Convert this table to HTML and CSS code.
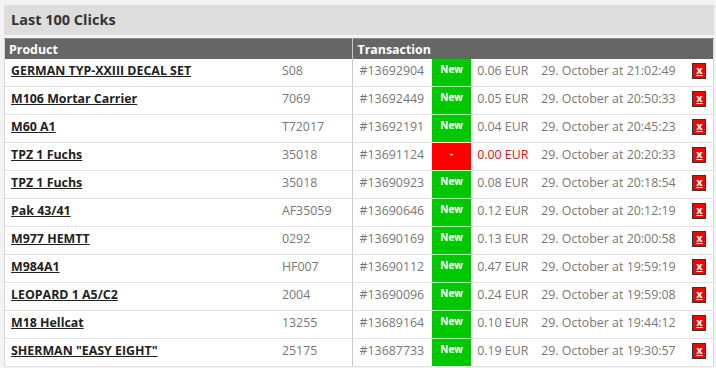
FILE: index.html
```html
<!DOCTYPE html>
<html>
<head>
<meta charset="utf-8">
<link rel="stylesheet" href="styles.css">
</head>
<body>
<div class="panel">
  <h2 class="title">Last 100 Clicks</h2>
  <table class="clicks">
    <colgroup>
      <col class="c-name"><col class="c-code"><col class="c-id"><col class="c-badge"><col class="c-amt"><col class="c-date"><col class="c-del">
    </colgroup>
    <thead>
      <tr><th colspan="2" class="divider">Product</th><th colspan="5">Transaction</th></tr>
    </thead>
    <tbody>
      <tr><td><a href="#">GERMAN TYP-XXIII DECAL SET</a></td><td class="divider">S08</td><td>#13692904</td><td class="badge new">New</td><td>0.06 EUR</td><td>29. October at 21:02:49</td><td class="del"><span class="x">x</span></td></tr>
      <tr><td><a href="#">M106 Mortar Carrier</a></td><td class="divider">7069</td><td>#13692449</td><td class="badge new">New</td><td>0.05 EUR</td><td>29. October at 20:50:33</td><td class="del"><span class="x">x</span></td></tr>
      <tr><td><a href="#">M60 A1</a></td><td class="divider">T72017</td><td>#13692191</td><td class="badge new">New</td><td>0.04 EUR</td><td>29. October at 20:45:23</td><td class="del"><span class="x">x</span></td></tr>
      <tr><td><a href="#">TPZ 1 Fuchs</a></td><td class="divider">35018</td><td>#13691124</td><td class="badge bad">-</td><td class="red">0.00 EUR</td><td>29. October at 20:20:33</td><td class="del"><span class="x">x</span></td></tr>
      <tr><td><a href="#">TPZ 1 Fuchs</a></td><td class="divider">35018</td><td>#13690923</td><td class="badge new">New</td><td>0.08 EUR</td><td>29. October at 20:18:54</td><td class="del"><span class="x">x</span></td></tr>
      <tr><td><a href="#">Pak 43/41</a></td><td class="divider">AF35059</td><td>#13690646</td><td class="badge new">New</td><td>0.12 EUR</td><td>29. October at 20:12:19</td><td class="del"><span class="x">x</span></td></tr>
      <tr><td><a href="#">M977 HEMTT</a></td><td class="divider">0292</td><td>#13690169</td><td class="badge new">New</td><td>0.13 EUR</td><td>29. October at 20:00:58</td><td class="del"><span class="x">x</span></td></tr>
      <tr><td><a href="#">M984A1</a></td><td class="divider">HF007</td><td>#13690112</td><td class="badge new">New</td><td>0.47 EUR</td><td>29. October at 19:59:19</td><td class="del"><span class="x">x</span></td></tr>
      <tr><td><a href="#">LEOPARD 1 A5/C2</a></td><td class="divider">2004</td><td>#13690096</td><td class="badge new">New</td><td>0.24 EUR</td><td>29. October at 19:59:08</td><td class="del"><span class="x">x</span></td></tr>
      <tr><td><a href="#">M18 Hellcat</a></td><td class="divider">13255</td><td>#13689164</td><td class="badge new">New</td><td>0.10 EUR</td><td>29. October at 19:44:12</td><td class="del"><span class="x">x</span></td></tr>
      <tr><td><a href="#">SHERMAN "EASY EIGHT"</a></td><td class="divider">25175</td><td>#13687733</td><td class="badge new">New</td><td>0.19 EUR</td><td>29. October at 19:30:57</td><td class="del"><span class="x">x</span></td></tr>
    </tbody>
  </table>
</div>
</body>
</html>
```
FILE: styles.css
```css
html, body {
  margin: 0;
  padding: 0;
  background: #f3f3f3;
  font-family: "Open Sans", "DejaVu Sans", sans-serif;
}
.panel {
  padding: 5px 2px 0 4px;
}
.title {
  margin: 0 0 3px 0;
  height: 30px;
  line-height: 30px;
  background: #dddddd;
  color: #333;
  font-size: 14.5px;
  font-weight: bold;
  padding-left: 7px;
}
.clicks {
  width: 710px;
  border-collapse: collapse;
  table-layout: fixed;
  background: #fff;
  border-left: 1px solid #d8d8d8;
  border-right: 1px solid #d8d8d8;
}
.c-name { width: 271px; }
.c-code { width: 77px; }
.c-id { width: 79px; }
.c-badge { width: 39px; }
.c-amt { width: 64px; }
.c-date { width: 151px; }
.c-del { width: 27px; }
.clicks th {
  background: #666;
  color: #fff;
  font-size: 12.4px;
  font-weight: bold;
  text-align: left;
  height: 20px;
  padding: 0 4px;
  border-top: 1px solid #888;
}
.clicks th.divider, .clicks td.divider {
  border-right: 1px solid #c8c8c8;
}
.clicks td {
  padding: 3px 6px 7px 6px;
  line-height: 17px;
  font-size: 12.4px;
  color: #777;
  border-bottom: 1px solid #e2e2e2;
  white-space: nowrap;
  vertical-align: top;
}
.clicks a {
  color: #222;
  font-weight: bold;
  text-decoration: underline;
}
.clicks td.badge {
  padding: 0;
  text-align: center;
  vertical-align: top;
  color: #fff;
  font-size: 10px;
  font-weight: bold;
  line-height: 20px;
}
.badge.new { background: #00c800; border-bottom-color: #d8f5d8; }
.badge.bad { background: #ff0000; }
.clicks td.red { color: #ff0000; }
.clicks td.del { padding: 0 0 0 6px; }
.x {
  display: inline-block;
  margin-top: 4px;
  width: 12px;
  height: 14px;
  background: #ff0000;
  border: 1px solid #333;
  color: #fff;
  font-size: 11px;
  font-weight: bold;
  text-align: center;
  line-height: 12px;
  text-decoration: underline;
  vertical-align: top;
}
```
